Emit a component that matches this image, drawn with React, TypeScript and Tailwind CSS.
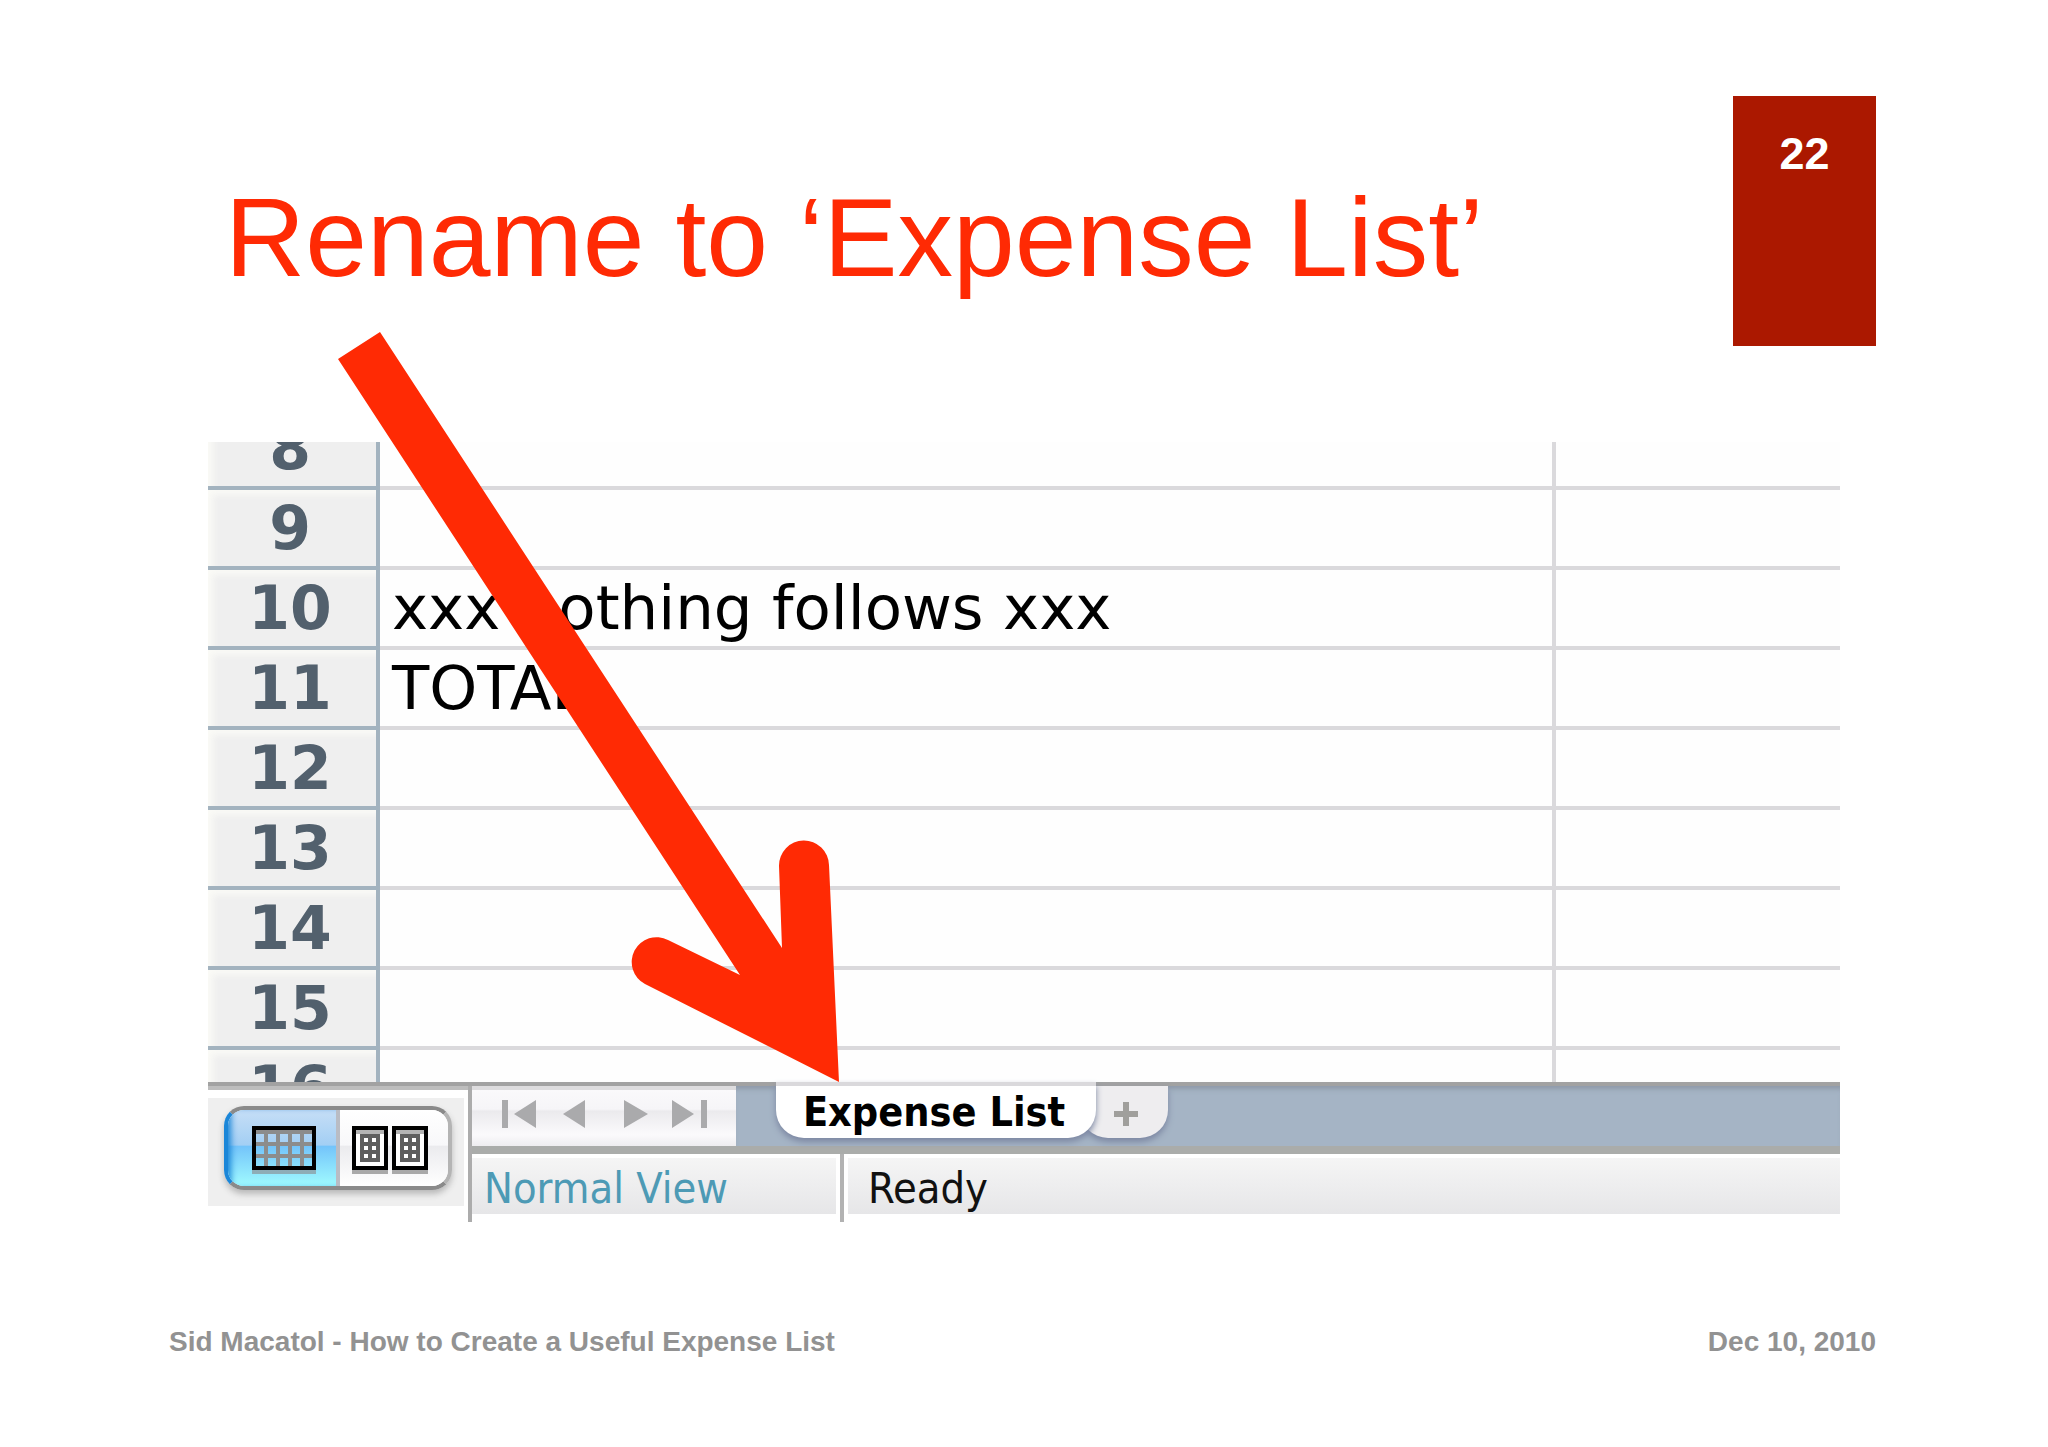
import React, { useState } from 'react';

interface Row {
  id: number;
  text?: string;
}

const rows: Row[] = [
  { id: 8 },
  { id: 9 },
  { id: 10, text: 'xxx nothing follows xxx' },
  { id: 11, text: 'TOTAL' },
  { id: 12 },
  { id: 13 },
  { id: 14 },
  { id: 15 },
  { id: 16 },
];

const GridIcon = () => (
  <svg width="64" height="48" viewBox="0 0 64 48" shapeRendering="crispEdges" aria-hidden="true">
    <path d="M0 44h64v4H0z" fill="#8d9499" fillOpacity="0.7" />
    <path
      d="M4 4h56v4H4zM4 16h56v4H4zM4 28h56v4H4zM12 4h4v36h-4zM24 4h4v36h-4zM36 4h4v36h-4zM48 4h4v36h-4z"
      fill="#8c8c8c"
    />
    <path d="M2 2h60v40H2z" fill="none" stroke="#000" strokeWidth="4" />
  </svg>
);

const PageIcon = () => (
  <svg width="36" height="48" viewBox="0 0 36 48" shapeRendering="crispEdges" aria-hidden="true">
    <path d="M0 44h36v4H0z" fill="#a9a9a9" />
    <path d="M4 4h28v36H4z" fill="#fff" />
    <path d="M4 4h28v4H4z" fill="#b4b4b4" />
    <path d="M8 8h20v28H8z" fill="#5f5f5f" />
    <path
      d="M12 12h4v4h-4zM20 12h4v4h-4zM12 20h4v4h-4zM20 20h4v4h-4zM12 28h4v4h-4zM20 28h4v4h-4z"
      fill="#fff"
    />
    <path d="M2 2h32v40H2z" fill="none" stroke="#000" strokeWidth="4" />
  </svg>
);

const navButtons = [
  { label: 'First sheet', width: 36, d: 'M0 0h6v28H0zM34 0v28L12 14z' },
  { label: 'Previous sheet', width: 22, d: 'M22 0v28L0 14z' },
  { label: 'Next sheet', width: 24, d: 'M0 0v28l24-14z' },
  { label: 'Last sheet', width: 36, d: 'M0 0v28l22-14zM29 0h6v28h-6z' },
];

const ViewSwitch = () => {
  const [view, setView] = useState('normal');

  return (
    <div className="flex h-21 w-57 overflow-hidden rounded-[20px] border-4 border-t-[#8a8a8a] border-r-[#b4b4b4] border-b-[#8a8a8a] border-l-[#1b86d8] shadow-[0_4px_6px_#b8b8b8]">
      <button
        type="button"
        aria-label="Normal view"
        aria-pressed={view === 'normal'}
        onClick={() => setView('normal')}
        className="flex w-27 items-center justify-center bg-[linear-gradient(#c6def6,#a3cff4_46%,#74c4fa_48%,#a0fbff)] pt-1 pl-1 shadow-[inset_6px_0_6px_-3px_#1b86d8,0_-4px_0_#10128c]"
      >
        <GridIcon />
      </button>
      <button
        type="button"
        aria-label="Page layout view"
        aria-pressed={view === 'page'}
        onClick={() => setView('page')}
        className="flex flex-1 items-center gap-1 border-l-4 border-[#b9bcc4] bg-[linear-gradient(#ffffff,#f8f8fa_46%,#ebebee_48%,#ffffff)] pt-1 pl-3"
      >
        <PageIcon />
        <PageIcon />
      </button>
    </div>
  );
};

const Sheet = () => (
  <div className="h-[640px] overflow-hidden">
    <table className="-mt-8 w-full table-fixed border-separate border-spacing-0 font-['DejaVu_Sans',Verdana,sans-serif]">
      <colgroup>
        <col className="w-[172px]" />
        <col />
        <col className="w-[284px]" />
      </colgroup>
      <tbody>
        {rows.map(row => (
          <tr key={row.id} className="h-20">
            <th
              scope="row"
              className="h-20 border-r-4 border-b-4 border-[#a3b3bf] bg-[#efefef] p-0 pr-1 text-center text-[60px] leading-[76px] font-bold text-[#52606d] shadow-[inset_8px_8px_6px_-3px_#fafaf6]"
            >
              {row.id}
            </th>
            <td className="border-r-4 border-b-4 border-[#dad9dc] bg-[#fefefe] p-0 pl-3 text-[61px] leading-[76px] whitespace-nowrap text-black">
              {row.text}
            </td>
            <td className="border-b-4 border-[#dad9dc] bg-[#fefefe] p-0" />
          </tr>
        ))}
      </tbody>
    </table>
  </div>
);

const SheetBar = () => (
  <div className="flex border-t-4 border-[#a2a2a2] font-['DejaVu_Sans_Condensed','DejaVu_Sans',sans-serif]">
    <div className="w-[260px] border-t-4 border-[#bdbdbd] pt-2 pr-1">
      <div className="flex h-27 items-start bg-[#efefef] pt-2 pl-4">
        <ViewSwitch />
      </div>
    </div>

    <div className="flex-1 border-l-4 border-[#acacac]">
      <div className="flex h-17 border-b-8 border-[#aaacaa] bg-[#a5b4c5]">
        <div className="flex w-66 items-center border-t-4 border-[#dddcde] bg-[linear-gradient(#faf9fb,#f6f5f8_34%,#ebeaed_38%,#fbfafc_80%,#eeedf0)] pb-2 pl-[30px]">
          {navButtons.map((btn, i) => (
            <button
              key={btn.label}
              type="button"
              aria-label={btn.label}
              className={i === 0 ? '' : i === 1 ? 'ml-[25px]' : i === 2 ? 'ml-[39px]' : 'ml-6'}
            >
              <svg width={btn.width} height="28" viewBox={`0 0 ${btn.width} 28`} aria-hidden="true">
                <path d={btn.d} fill="#aaaaac" />
              </svg>
            </button>
          ))}
        </div>
        <div className="flex flex-1 items-start pl-10 shadow-[inset_0_6px_5px_-3px_#8e99a8]">
          <button
            type="button"
            className="relative z-10 -mt-1 h-14 w-80 rounded-b-[28px] border-t-4 border-[#dad9dc] bg-white pr-1 text-[41px] leading-[52px] font-bold whitespace-nowrap text-black shadow-[0_4px_6px_#7d88a3]"
          >
            Expense List
          </button>
          <button
            type="button"
            aria-label="Add sheet"
            className="-ml-4 flex h-13 w-22 items-center justify-center rounded-b-[28px] bg-[#eeedef] pt-1 pl-1 shadow-[0_4px_6px_#7d88a3]"
          >
            <svg width="24" height="24" viewBox="0 0 24 24" aria-hidden="true">
              <path d="M12 0v24M0 12h24" stroke="#a09f9c" strokeWidth="6" />
            </svg>
          </button>
        </div>
      </div>

      <div className="flex h-17 text-[43px] leading-[52px]">
        <div className="w-[368px] pr-1">
          <div className="h-15 border-t-4 border-white bg-linear-to-b from-[#f5f5f5] to-[#e6e6e8] pt-1 pl-3 whitespace-nowrap text-[#4d9ab5]">
            Normal View
          </div>
        </div>
        <div className="flex-1 border-l-4 border-[#b2b2b2] pl-1">
          <div className="h-15 border-t-4 border-white bg-linear-to-b from-[#f5f5f5] to-[#e6e6e8] pt-1 pl-5 text-[#111111]">
            Ready
          </div>
        </div>
      </div>
    </div>
  </div>
);

// Points from the title down to the renamed tab
const Arrow = () => (
  <svg
    className="pointer-events-none absolute -top-[110px] left-[130px] z-20"
    width="502"
    height="750"
    viewBox="0 0 502 750"
    aria-hidden="true"
  >
    <path
      d="M42 0L444 616L441 534A24 24 0 0 1 491 533L501 750L307 652A24 24 0 0 1 330 608L402 643L0 27Z"
      fill="#ff2a04"
    />
  </svg>
);

export default function App() {
  return (
    <main className="min-h-screen bg-white pt-24 font-['Liberation_Sans',Arial,sans-serif]">
      <header className="flex items-start justify-between pr-[172px] pl-[225px]">
        <h1 className="pt-[82px] text-[111px] leading-[120px] whitespace-nowrap text-[#ff2a04]">
          Rename to ‘Expense List’
        </h1>
        <div className="h-[250px] w-[143px] bg-[#ab1800] pt-[34px] text-center text-[45px] leading-[48px] font-bold text-white">
          22
        </div>
      </header>

      <section className="relative mx-[208px] mt-24">
        <Sheet />
        <SheetBar />
        <Arrow />
      </section>

      <footer className="mt-[100px] flex justify-between pr-[172px] pb-12 pl-[169px] text-[28px] leading-[40px] font-bold text-[#929292]">
        <span>Sid Macatol - How to Create a Useful Expense List</span>
        <span>Dec 10, 2010</span>
      </footer>
    </main>
  );
}
